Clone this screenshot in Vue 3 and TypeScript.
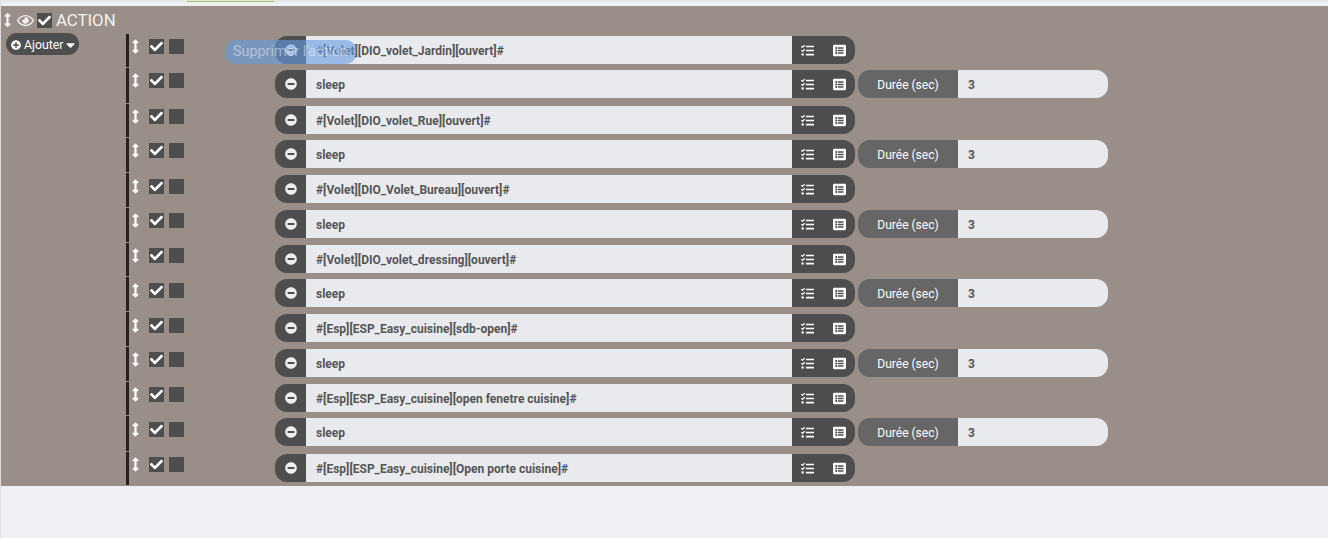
<template>
  <div class="page">
    <div class="topbar"><span class="tab-line"></span></div>
    <div class="panel">
      <div class="head">
        <svg class="ic head-arrow" viewBox="0 0 256 512"><path :d="icons.arrows" /></svg>
        <svg class="ic head-eye" viewBox="0 0 576 512"><path :d="icons.eye" /></svg>
        <span class="box head-box"><svg class="ic" viewBox="0 0 512 512"><path :d="icons.check" /></svg></span>
        <span class="head-title">ACTION</span>
      </div>
      <div class="body">
        <div class="side">
          <button class="add">
            <svg class="ic add-plus" viewBox="0 0 512 512"><path :d="icons.plus" /></svg>
            Ajouter
            <svg class="ic add-caret" viewBox="0 0 320 512"><path :d="icons.caret" /></svg>
          </button>
        </div>
        <div class="rows">
          <div v-for="(row, i) in rows" :key="i" class="row" :style="{ height: row.h + 'px' }">
            <div class="handles" :style="{ paddingTop: row.top + 'px' }">
              <svg class="ic arrow" viewBox="0 0 256 512"><path :d="icons.arrows" /></svg>
              <span class="box"><svg class="ic" viewBox="0 0 512 512"><path :d="icons.check" /></svg></span>
              <span class="box"></span>
            </div>
            <div class="group main">
              <span class="addon minus"><svg class="ic" viewBox="0 0 512 512"><path :d="icons.minus" /></svg></span>
              <input class="field" :value="row.cmd" readonly />
              <span class="addon btns">
                <svg class="ic" viewBox="0 0 512 512"><path :d="icons.tasks" /></svg>
                <svg class="ic" viewBox="0 0 512 512"><path :d="icons.list" /></svg>
              </span>
            </div>
            <div v-if="row.cmd === 'sleep'" class="group duration">
              <span class="label">Durée (sec)</span>
              <input class="field" value="3" readonly />
            </div>
          </div>
        </div>
      </div>
      <div class="tip">Supprimer l'action</div>
    </div>
  </div>
</template>

<script setup lang="ts">
const icons = {
  arrows: "M214.059 377.941H168V134.059h46.059c21.382 0 32.09-25.851 16.971-40.971L144.971 7.029c-9.373-9.373-24.568-9.373-33.941 0L24.971 93.088c-15.119 15.119-4.411 40.971 16.971 40.971H88v243.882H41.941c-21.382 0-32.09 25.851-16.971 40.971l86.059 86.059c9.373 9.373 24.568 9.373 33.941 0l86.059-86.059c15.12-15.119 4.412-40.971-16.97-40.971z",
  eye: "M288 144a110.94 110.94 0 0 0-31.24 5 55.4 55.4 0 0 1 7.24 27 56 56 0 0 1-56 56 55.4 55.4 0 0 1-27-7.24A111.71 111.71 0 1 0 288 144zm284.52 97.4C518.29 135.59 410.93 64 288 64S57.68 135.64 3.48 241.41a32.35 32.35 0 0 0 0 29.19C57.71 376.41 165.07 448 288 448s230.32-71.64 284.52-177.41a32.35 32.35 0 0 0 0-29.19zM288 400c-98.65 0-189.09-55-237.93-144C98.91 167 189.34 112 288 112s189.09 55 237.93 144C477.1 345 386.66 400 288 400z",
  check: "M173.898 439.404l-166.4-166.4c-9.997-9.997-9.997-26.206 0-36.204l36.203-36.204c9.997-9.998 26.207-9.998 36.204 0L192 312.69 432.095 72.596c9.997-9.997 26.207-9.997 36.204 0l36.203 36.204c9.997 9.997 9.997 26.206 0 36.204l-294.4 294.401c-9.998 9.997-26.207 9.997-36.204-.001z",
  plus: "M256 8C119 8 8 119 8 256s111 248 248 248 248-111 248-248S393 8 256 8zm144 276c0 6.6-5.4 12-12 12h-92v92c0 6.6-5.4 12-12 12h-56c-6.6 0-12-5.4-12-12v-92h-92c-6.6 0-12-5.4-12-12v-56c0-6.6 5.4-12 12-12h92v-92c0-6.6 5.4-12 12-12h56c6.6 0 12 5.4 12 12v92h92c6.6 0 12 5.4 12 12v56z",
  minus: "M256 8C119 8 8 119 8 256s111 248 248 248 248-111 248-248S393 8 256 8zM124 296c-6.6 0-12-5.4-12-12v-56c0-6.6 5.4-12 12-12h264c6.6 0 12 5.4 12 12v56c0 6.6-5.4 12-12 12H124z",
  caret: "M31.3 192h257.3c17.8 0 26.7 21.5 14.1 34.1L174.1 354.8c-7.8 7.8-20.5 7.8-28.3 0L17.2 226.1C4.6 213.5 13.5 192 31.3 192z",
  tasks: "M139.61 35.5a12 12 0 0 0-17 0L58.93 98.81l-22.7-22.12a12 12 0 0 0-17 0L3.53 92.41a12 12 0 0 0 0 17l47.59 47.4a12.78 12.78 0 0 0 17.61 0l15.59-15.62L156.52 69a12.09 12.09 0 0 0 .09-17zm0 159.19a12 12 0 0 0-17 0l-63.68 63.72-22.7-22.1a12 12 0 0 0-17 0L3.53 252a12 12 0 0 0 0 17L51 316.5a12.77 12.77 0 0 0 17.6 0l15.7-15.69 72.2-72.22a12 12 0 0 0 .09-16.9zM64 368c-26.49 0-48.59 21.5-48.59 48S37.53 464 64 464a48 48 0 0 0 0-96zm432 16H208a16 16 0 0 0-16 16v32a16 16 0 0 0 16 16h288a16 16 0 0 0 16-16v-32a16 16 0 0 0-16-16zm0-320H208a16 16 0 0 0-16 16v32a16 16 0 0 0 16 16h288a16 16 0 0 0 16-16V80a16 16 0 0 0-16-16zm0 160H208a16 16 0 0 0-16 16v32a16 16 0 0 0 16 16h288a16 16 0 0 0 16-16v-32a16 16 0 0 0-16-16z",
  list: "M464 480H48c-26.51 0-48-21.49-48-48V80c0-26.51 21.49-48 48-48h416c26.51 0 48 21.49 48 48v352c0 26.51-21.49 48-48 48zM128 120c-22.091 0-40 17.909-40 40s17.909 40 40 40 40-17.909 40-40-17.909-40-40-40zm0 96c-22.091 0-40 17.909-40 40s17.909 40 40 40 40-17.909 40-40-17.909-40-40-40zm0 96c-22.091 0-40 17.909-40 40s17.909 40 40 40 40-17.909 40-40-17.909-40-40-40zm288-136v-32c0-6.627-5.373-12-12-12H204c-6.627 0-12 5.373-12 12v32c0 6.627 5.373 12 12 12h200c6.627 0 12-5.373 12-12zm0 96v-32c0-6.627-5.373-12-12-12H204c-6.627 0-12 5.373-12 12v32c0 6.627 5.373 12 12 12h200c6.627 0 12-5.373 12-12zm0 96v-32c0-6.627-5.373-12-12-12H204c-6.627 0-12 5.373-12 12v32c0 6.627 5.373 12 12 12h200c6.627 0 12-5.373 12-12z",
};

const cmds = [
  "#[Volet][DIO_volet_Jardin][ouvert]#",
  "sleep",
  "#[Volet][DIO_volet_Rue][ouvert]#",
  "sleep",
  "#[Volet][DIO_Volet_Bureau][ouvert]#",
  "sleep",
  "#[Volet][DIO_volet_dressing][ouvert]#",
  "sleep",
  "#[Esp][ESP_Easy_cuisine][sdb-open]#",
  "sleep",
  "#[Esp][ESP_Easy_cuisine][open fenetre cuisine]#",
  "sleep",
  "#[Esp][ESP_Easy_cuisine][Open porte cuisine]#",
];
// the lines are not evenly spaced in the reference, so pitch and handle offset go row by row
const pitch = [34, 36, 34, 35, 35, 35, 34, 35, 35, 35, 34, 36, 34];
const handleTop = [5, 5, 5, 5, 6, 5, 5, 6, 6, 5, 5, 6, 5];
const rows = cmds.map((cmd, i) => ({ cmd, h: pitch[i] - 1, top: handleTop[i] }));
</script>

<style scoped>
.page {
  height: 538px;
  overflow: hidden;
  background: #eff0f3;
  border-left: 1px solid #dcdde0;
  font-family: Roboto, "Liberation Sans", sans-serif;
}
.topbar {
  height: 6px;
  padding: 1px 0 0 186px;
  box-sizing: border-box;
  background: linear-gradient(#e6e7ea 2px, #eff0f3 2px);
}
.tab-line {
  display: block;
  width: 87px;
  height: 1px;
  background: #9cc65a;
}
.panel {
  position: relative;
  height: 480px;
  background: #998f88;
}
.ic {
  display: block;
  fill: currentColor;
}
.head {
  display: flex;
  align-items: center;
  height: 28px;
  color: #f2f2f2;
}
.head-arrow {
  width: 7px;
  height: 14px;
  margin-left: 3px;
}
.head-eye {
  width: 17px;
  height: 15px;
  margin-left: 6px;
}
.head-box {
  margin-left: 3px;
}
.head-title {
  margin-left: 4px;
  font-size: 16.8px;
}
.box {
  display: flex;
  align-items: center;
  justify-content: center;
  width: 15px;
  height: 15px;
  background: #4e4e4e;
  color: #fff;
}
.box .ic {
  width: 13px;
  height: 13px;
}
.body {
  display: flex;
}
.side {
  width: 125px;
  padding-left: 5px;
  box-sizing: border-box;
}
.add {
  display: flex;
  align-items: center;
  height: 22px;
  margin-top: -1px;
  padding: 1px 4px 0 5px;
  border: 0;
  border-radius: 11px;
  background: #4e4e4e;
  color: #fff;
  font: 12.3px Roboto, sans-serif;
}
.add-plus {
  width: 10px;
  height: 10px;
  margin-right: 3px;
}
.add-caret {
  width: 9px;
  height: 14px;
  margin-left: 3px;
}
.rows {
  display: flex;
  flex-direction: column;
}
.row {
  display: flex;
  align-items: flex-start;
  border-left: 3px solid #222;
  margin-bottom: 1px;
}
.handles {
  display: flex;
  align-items: flex-start;
  gap: 5px;
  width: 146px;
  padding-left: 3px;
  box-sizing: border-box;
}
.arrow {
  width: 7px;
  height: 15px;
  margin-right: 5px;
  color: #fff;
}
.group {
  display: flex;
  height: 28px;
  margin-top: 2px;
  border-radius: 12px;
  overflow: hidden;
  font-size: 12px;
}
.main {
  width: 580px;
}
.addon {
  display: flex;
  align-items: center;
  background: #4e4e4e;
  color: #eee;
}
.minus {
  justify-content: center;
  width: 31px;
}
.minus .ic {
  width: 12px;
  height: 12px;
}
.btns {
  justify-content: space-around;
  width: 63px;
  box-sizing: border-box;
  color: #fff;
}
.btns .ic {
  width: 13px;
  height: 13px;
}
.field {
  flex: 1;
  min-width: 0;
  padding: 2px 10px 0;
  border: 0;
  outline: 0;
  background: #e9eaee;
  color: #555;
  font: bold 12px Roboto, sans-serif;
}
.duration {
  width: 250px;
  margin-left: 3px;
}
.label {
  display: flex;
  align-items: center;
  justify-content: center;
  width: 100px;
  padding-top: 1px;
  box-sizing: border-box;
  background: #666;
  color: #fff;
}
.tip {
  position: absolute;
  left: 224px;
  top: 34px;
  width: 131px;
  height: 24px;
  line-height: 24px;
  border-radius: 10px;
  background: rgba(100, 155, 225, 0.6);
  color: rgba(255, 255, 255, 0.45);
  font-size: 14.4px;
  text-align: center;
}
</style>
